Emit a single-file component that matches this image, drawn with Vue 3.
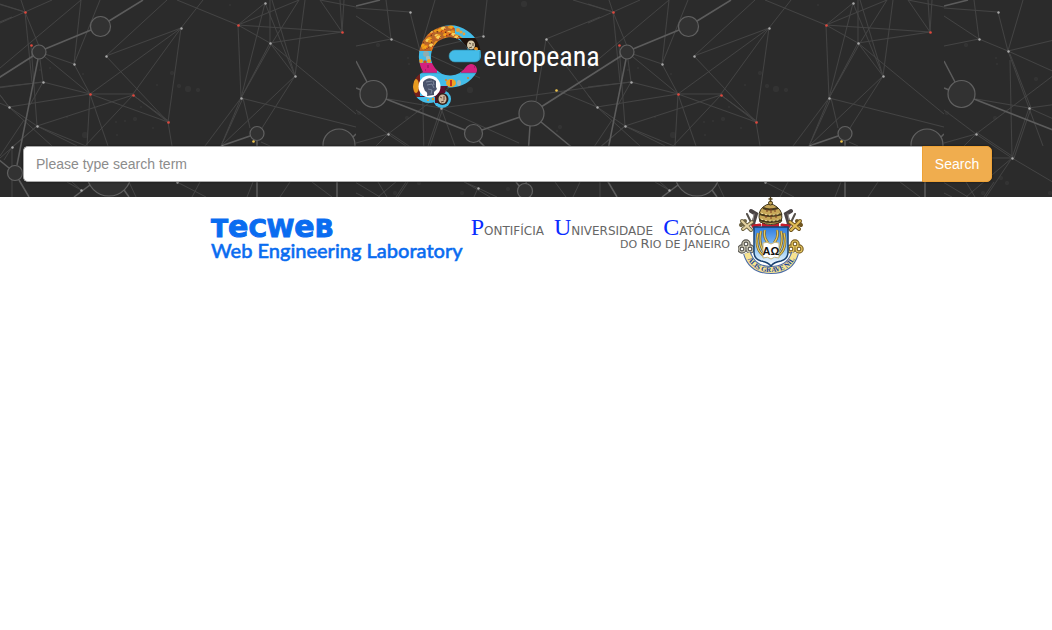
<script setup>
import { ref } from 'vue'

const term = ref('')

// Constellation artwork: one 588px wide tile, x runs from 356 to 944.
const thin = [
  'M356 8L410 12L420 51L435 0M386 0L391 39L356 16M356 46L391 39L420 51L483 36L487 0',
  'M420 51L480 78M420 51L441 108L424 158L422 60M422 54L443 108L426 158',
  'M388 99L441 108L519 143M441 108L600 86L631 82M441 108L455 146',
  'M356 110L388 134L470 72M356 143L388 134L424 158L490 197M388 132L427 158M404 158H424',
  'M388 134L372 150M424 158L398 197M424 158L378 197M378 182L387 197M356 193L364 197',
  'M464 182L478 188L474 197M478 188L497 197M355 182L380 197M406 182L396 197M555 182L566 197M580 182L573 197',
  'M600 17L546 39L536 101M546 39L597 107L556 90M573 0L613 12L640 0M613 12L609 0M613 12L588 4M588 23L613 12',
  'M613 12L627 46M613 12L620 82M669 0L588 68M669 0L662 64L688 0M662 64L678 94L627 52L662 64',
  'M631 82L627 52M588 87L631 82L678 94L597 107L588 95M619 45L625 126M631 82L618 105',
  'M678 94H721L769 28L678 94L756 122L721 95L625 126M769 28L756 122M694 56L756 122M694 56L769 28L791 0M694 56L755 0',
  'M678 94L675 146M678 94L696 146M721 95L673 146M756 122L760 146M722 96L758 122',
  'M597 107L625 126L665 146M625 126L674 146M625 126L600 147L592 160M625 126L588 158M597 107L640 146',
  'M600 147V197M612 120L588 156M655 182L669 190L660 182M765 182L794 197M788 182L780 197M717 182L724 197',
  'M765 0L826 25L853 3L829 98L826 25L887 0M826 25L930 32L858 43L826 25',
  'M858 0V43L829 98L860 43L887 0M853 3L883 76L860 0M883 76L893 0M883 76L858 43L944 114',
  'M829 98L944 127M829 98L809 146L831 98L838 128M829 98L793 146M883 76L850 128M883 76L809 146',
  'M908 0L930 32L928 0M930 32L932 0M908 0L944 7M849 142L858 146M841 182L835 197M878 182L868 197M900 182L920 197',
]
const thick = [
  'M356 6L380 0M356 61L367 82M356 88L361 90M386 99L465 130M479 141L486 148M482 130L520 117',
  'M541 107L621 56M541 122L597 168M530 126L526 185M516 182L520 187M605 165L626 59M633 49L679 30M697 21L731 0',
  'M607 180L617 197M678 185L662 197M712 190L717 197M809 146L838 136M845 141V197M925 161V197M941 137L944 134',
]
const rings = [
  [373.5, 94, 13.5], [473.5, 133.5, 9], [531.5, 113.5, 12.5], [525, 191, 7.5], [603, 173, 7.5], [627, 52, 7],
  [688.5, 26.5, 10], [697, 174, 22], [845, 133.5, 7], [927, 145, 16],
]
const stars = [
  [410, 12], [391, 39], [420, 51], [483, 36], [546, 39], [597, 107], [388, 134], [441, 108], [424, 158],
  [478, 188], [662, 64], [694, 56], [769, 28], [631, 82], [625, 126], [600, 147], [669, 190], [765, 182],
  [853, 3], [858, 43], [883, 76], [829, 98], [810, 146],
]
const redStars = [[613, 12], [619, 45], [678, 94], [721, 95], [756, 122], [826, 25], [930, 32]]
const goldStars = [[556, 90], [841, 141]]
const dust = [
  [767, 86, 2], [776, 89, 3], [786, 90, 2], [760, 73, 2], [673, 135, 3], [723, 119, 2], [713, 121, 1], [704, 122, 1],
  [741, 128, 1], [705, 135, 1], [655, 117, 1], [628, 70, 1], [638, 68, 1], [671, 74, 1], [745, 85, 1], [729, 107, 1],
  [818, 5, 1], [470, 90, 3], [378, 45, 2], [359, 113, 2], [407, 118, 2], [413, 178, 2], [419, 183, 2], [395, 193, 2],
  [524, 4, 3], [560, 127, 2], [557, 131, 1], [462, 193, 2], [408, 58, 1], [409, 64, 1], [448, 79, 2], [508, 189, 2],
]

// Orange fish scattered over the upper-left arc of the mark.
const fish = []
for (let row = 0; row < 11; row++) {
  for (let col = 0; col < 13; col++) {
    const x = 7 + col * 4.4 + Math.sin(row * 7 + col * 3) * 1.6
    const y = 5 + row * 3.4 + Math.cos(row * 3 + col * 5) * 1.2
    if (x + y * 0.4 < 60) fish.push({ x, y, alt: (row * 5 + col * 3) % 4 })
  }
}
const fishColors = ['#f5a51c', '#e9951b', '#f8d05b', '#e3761c']
</script>

<template>
  <div class="page">
    <header class="hero">
      <svg class="sky" aria-hidden="true">
        <defs>
          <pattern id="net" x="-232" y="0" width="588" height="197" viewBox="356 0 588 197" patternUnits="userSpaceOnUse">
            <circle v-for="(d, i) in dust" :key="'d' + i" :cx="d[0]" :cy="d[1]" :r="d[2]" fill="#333" />
            <path v-for="(d, i) in thin" :key="'t' + i" :d="d" class="thin" />
            <path v-for="(d, i) in thick" :key="'k' + i" :d="d" class="thick" />
            <circle v-for="(c, i) in rings" :key="'r' + i" :cx="c[0]" :cy="c[1]" :r="c[2]" class="ring" />
            <circle v-for="(s, i) in stars" :key="'s' + i" :cx="s[0] + .5" :cy="s[1] + .5" r="1.2" fill="#a8a8a8" />
            <circle v-for="(s, i) in redStars" :key="'e' + i" :cx="s[0] + .5" :cy="s[1] + .5" r="1.3" fill="#e0473c" />
            <circle v-for="(s, i) in goldStars" :key="'g' + i" :cx="s[0] + .5" :cy="s[1] + .5" r="1.3" fill="#f0c64c" />
          </pattern>
        </defs>
        <rect width="100%" height="100%" fill="url(#net)" />
      </svg>

      <div class="inner">
        <a class="brand" href="#">
          <svg class="mark" viewBox="0 0 72 90" aria-hidden="true">
            <defs>
              <mask id="letter" maskUnits="userSpaceOnUse" x="0" y="0" width="72" height="90">
                <path d="M60 47A25 25 0 1 1 64 33H44" fill="none" stroke="#fff" stroke-width="12" stroke-linecap="round" stroke-linejoin="round" />
                <circle cx="18" cy="64" r="16" fill="#fff" />
                <circle cx="31" cy="76" r="9" fill="#fff" />
              </mask>
            </defs>
            <g mask="url(#letter)">
              <rect width="72" height="90" fill="#43bce8" />
              <path d="M8 26Q12 4 36 3L54 8V16L36 15Q24 18 20 32H8Z" fill="#b8652a" />
              <g v-for="(f, i) in fish" :key="i">
                <ellipse :cx="f.x" :cy="f.y" rx="2.2" ry="1.7" :fill="fishColors[f.alt]" />
                <circle :cx="f.x + 1.4" :cy="f.y + 1" r=".8" :fill="f.alt % 2 ? '#6b3018' : '#b52f1b'" />
              </g>
              <path d="M44 3L52 2Q68 8 68 18H54Q50 12 44 11Z" fill="#43bce8" />
              <circle cx="47" cy="7" r="2" fill="#e9a13a" /><circle cx="50" cy="9" r="1.6" fill="#e9a13a" /><circle cx="53" cy="11" r="1.400" fill="#e9a13a" />
              <path d="M7 28H21V40H7Z" fill="#43bce8" />
              <circle cx="15" cy="31" r="3" fill="#8eaeb0" /><circle cx="17" cy="35" r="2.2" fill="#a9bcb4" />
              <circle cx="10" cy="38" r="2" fill="#f0a322" /><circle cx="14" cy="39" r="1.800" fill="#c94b1d" /><circle cx="18" cy="38" r="2" fill="#f0a322" />
              <path d="M48 15H70V27H58Z" fill="#20130c" />
              <ellipse cx="60" cy="22" rx="4" ry="4.5" fill="#d6c8a9" />
              <path d="M58 20l2 1M62 20v3M58 25l3-1" stroke="#5c4b37" />
              <circle cx="65" cy="26" r="2" fill="#e59325" />
              <path d="M6 40H26V50H6ZM50 38.500H71V50H50Z" fill="#d4207f" />
              <path d="M17 42v3M14 47h1M63 44h1" stroke="#851454" />
              <path d="M4 50H70" stroke="#277ba0" opacity=".5" />
              <path d="M0 50H9V74H0Z" fill="#75201d" />
              <ellipse cx="5" cy="63" rx="3" ry="7" fill="#e89b20" />
              <path d="M8 73H24L29 64H36L32 72V80H16Z" fill="#4d1028" />
              <path d="M28 63H37L34 70H26Z" fill="#5d102f" />
              <path d="M0 74H24V90H0Z" fill="#43bce8" />
              <circle cx="17" cy="77" r="1" fill="#e89b20" /><circle cx="22" cy="76" r="1.200" fill="#e89b20" />
              <ellipse cx="40" cy="60" rx="5" ry="4" fill="#f0a322" /><path d="M40 57v6" stroke="#c5311d" stroke-width="2" fill="none" />
              <ellipse cx="48" cy="60" rx="2" ry="3" fill="#9bb9c0" />
              <circle cx="35" cy="57" r="1" fill="#e67c20" /><circle cx="57" cy="55" r="1" fill="#e67c20" />
            </g>
            <path d="M64 27H44A6 6 0 0 0 44 39H64A5 5 0 0 0 69 34V28" fill="#43bce8" stroke="#237d9f" stroke-width=".6" />
            <circle cx="18.500" cy="63.500" r="11" fill="#fff" />
            <path d="M12 59q6-7 13-1l0 6 1 2-3 3v3l-7 1q1-4-2-5l-2-5z" fill="#4a546c" />
            <path d="M15 59l6-1M16 62l5-1 2 4M17 66l4 1-1 4M22 58l1 4" fill="none" stroke="#8a95ab" stroke-width=".8" />
            <circle cx="31.500" cy="76" r="6" fill="#352019" />
            <ellipse cx="31.500" cy="76" rx="4" ry="4.500" fill="#cdb69d" />
            <path d="M29 74l2 1M33 73v4M30 79l3-1" stroke="#684a39" fill="none" />
          </svg>
          <span class="brand-name">europeana</span>
        </a>

        <form class="search" role="search" @submit.prevent>
          <input v-model="term" type="text" aria-label="Search term" placeholder="Please type search term" />
          <button type="submit">Search</button>
        </form>
      </div>
    </header>

    <footer class="inner credits">
      <div class="lab">
        <span class="lab-mark">T<i>e</i>CW<i>e</i>B</span>
        <span class="lab-name">Web Engineering Laboratory</span>
      </div>
      <div class="university">
        <div class="uni-name">
          <span><b>P</b>ontifícia</span><span><b>U</b>niversidade</span><span><b>C</b>atólica</span>
        </div>
        <div class="uni-city">do <i>R</i>io de <i>J</i>aneiro</div>
      </div>
      <svg class="crest" viewBox="0 0 66 80" role="img" aria-label="University crest">
        <defs>
          <linearGradient id="field" x1="0" y1="0" x2="0" y2="1">
            <stop offset="0" stop-color="#2d7ce0" /><stop offset=".65" stop-color="#a5d2f8" /><stop offset="1" stop-color="#fff" />
          </linearGradient>
        </defs>
        <g fill="none" stroke-linecap="round">
          <path d="M9 17L23 46M57 17L43 46" stroke="#55504a" stroke-width="2" />
          <path d="M13 14l5 3-3 10 3 4M53 14l-5 3 3 10-3 4" stroke="#4a4345" stroke-width="4" />
          <path d="M16 17l-1 6M50 17l1 6" stroke="#9a9494" />
          <path d="M15 29l7-1M51 29l-7-1" stroke="#c51d2c" stroke-width="3" />
          <path d="M4 24l9 9M5 32l9-7M3 28l4-4" stroke="#6f6545" stroke-width="4" />
          <path d="M4 24l9 9M5 32l9-7" stroke="#e4d3a0" stroke-width="2" />
          <path d="M62 24l-9 9M61 32l-9-7M63 28l-4-4" stroke="#6f5520" stroke-width="4" />
          <path d="M62 24l-9 9M61 32l-9-7" stroke="#e2bd56" stroke-width="2" />
          <g stroke="#57554f" stroke-width="3.500"><circle cx="8" cy="47" r="3" /><circle cx="4" cy="52" r="3" /><circle cx="12" cy="52" r="3" /></g>
          <g stroke="#c9c6b5" stroke-width="1.200"><circle cx="8" cy="47" r="3" /><circle cx="4" cy="52" r="3" /><circle cx="12" cy="52" r="3" /></g>
          <g stroke="#7d6227" stroke-width="3.500"><circle cx="57" cy="47" r="3" /><circle cx="53" cy="52" r="3" /><circle cx="61" cy="52" r="3" /></g>
          <g stroke="#e5c65f" stroke-width="1.200"><circle cx="57" cy="47" r="3" /><circle cx="53" cy="52" r="3" /><circle cx="61" cy="52" r="3" /></g>
        </g>
        <path d="M24 25q8 6 17 0v5H24z" fill="#c51d2c" />
        <path d="M22 25q-3-10 3-15 7-6 14 0 7 5 4 15-10 5-21 0z" fill="#c7a758" stroke="#3e341e" />
        <path d="M22 23q10 4 22 0M22 17q10 4 22 0M25 11q7 3 15 0" stroke="#463a1c" stroke-width="2" fill="none" />
        <path d="M23 22q10 4 20 0M23 16q10 4 20 0" stroke="#f6e7a7" fill="none" stroke-dasharray="2 2" />
        <path d="M29 12v3M33 11v5M37 12v3M28 18v3M33 18v4M38 18v3" stroke="#7b3f22" />
        <circle cx="32.500" cy="6" r="2" fill="#c7a758" stroke="#463a1c" />
        <path d="M32.500 0v5M30.500 2h4" stroke="#57471f" stroke-width="1.300" />
        <path d="M9 56Q14 73 33 73Q52 73 57 56" fill="none" stroke="#4b6ba8" stroke-width="8" />
        <path d="M9 56Q14 73 33 73Q52 73 57 56" fill="none" stroke="#f7e391" stroke-width="6" />
        <path id="motto-line" d="M7 55Q12 75 33 75Q54 75 59 55" fill="none" />
        <text class="motto"><textPath href="#motto-line" startOffset="50%" text-anchor="middle">ALIS GRAVE NIL</textPath></text>
        <path d="M16 30H50V55Q50 62 43 64Q36 65 33 69Q30 65 23 64Q16 62 16 55Z" fill="url(#field)" stroke="#18416f" stroke-width="1.500" />
        <g fill="none" stroke="#786226" stroke-width="2.500">
          <path d="M20 36q-4 16 6 23M23 34q-3 12 3 21M27 33q-2 7 3 13M46 36q4 16-6 23M43 34q3 12-3 21M39 33q2 7-3 13" />
        </g>
        <g fill="none" stroke="#e7c95e" stroke-width="1.200">
          <path d="M20 36q-4 16 6 23M23 34q-3 12 3 21M27 33q-2 7 3 13M46 36q4 16-6 23M43 34q3 12-3 21M39 33q2 7-3 13" />
        </g>
        <path d="M25 46q4-2 8 1 4-3 8-1v15q-5-2-8 1-3-3-8-1z" fill="#fff" stroke="#c6b67f" />
        <text x="33" y="58" text-anchor="middle" class="crest-letters">AΩ</text>
      </svg>
    </footer>
  </div>
</template>

<style>
body {
  margin: 0;
  background: #fff;
}
</style>

<style scoped>
.page {
  font-family: "Liberation Sans", Arial, sans-serif;
}
.hero {
  position: relative;
  padding: 23px 0 15px;
  background: #2b2b2b;
}
.sky {
  position: absolute;
  inset: 0;
  width: 100%;
  height: 100%;
}
.thin {
  fill: none;
  stroke: #434343;
  stroke-width: 1;
}
.thick {
  fill: none;
  stroke: #5c5c5c;
  stroke-width: 1.500;
}
.ring {
  fill: #323232;
  stroke: #606060;
  stroke-width: 1.200;
}
.inner {
  position: relative;
  margin: 0 60px 0 23px;
}
.brand {
  display: flex;
  justify-content: center;
  margin-right: 4px;
  color: #fff;
  text-decoration: none;
}
.mark {
  width: 72px;
  height: 90px;
}
.brand-name {
  font: 28px/36px "Roboto Condensed", Roboto, "Liberation Sans", sans-serif;
  margin-top: 16px;
}
.search {
  display: flex;
  margin-top: 33px;
  border-radius: 5px;
  box-shadow: 0 0 2px #111;
}
.search input {
  flex: 1;
  min-width: 0;
  height: 36px;
  box-sizing: border-box;
  padding: 0 12px;
  border: 1px solid #aaa;
  border-right: 0;
  border-radius: 5px 0 0 5px;
  background: #fff;
  font: 14px "Liberation Sans", Arial, sans-serif;
  color: #444;
}
.search input::placeholder {
  color: #8c8c8c;
  opacity: 1;
}
.search button {
  width: 70px;
  height: 36px;
  padding: 0;
  border: 1px solid #eea236;
  border-radius: 0 5px 5px 0;
  background: #f0ad4e;
  color: #fff;
  font: 14px "Liberation Sans", Arial, sans-serif;
}
.credits {
  display: flex;
  justify-content: center;
  align-items: flex-start;
}
.lab {
  display: flex;
  flex-direction: column;
  padding-top: 18px;
  color: #0a6cf0;
}
.lab-mark {
  font: 900 25px/24px "DejaVu Sans", sans-serif;
  -webkit-text-stroke: 1px #0a6cf0;
}
.lab-mark i {
  font-size: 30px;
  font-style: normal;
  line-height: 24px;
}
.lab-name {
  font: 500 20px/18px "Lato Medium", Lato, sans-serif;
  -webkit-text-stroke: 0.5px #0a6cf0;
  white-space: nowrap;
}
.university {
  margin: 26px 8px 0 8px;
  color: #666;
}
.uni-name {
  display: flex;
  justify-content: space-between;
  gap: 10px;
  font: 12px/16px "DejaVu Sans", sans-serif;
  text-transform: uppercase;
}
.uni-name b {
  font: 24px/8px "Liberation Serif", serif;
  color: #0a2cff;
}
.uni-city {
  font: 11px/10px "DejaVu Sans", sans-serif;
  text-align: right;
  text-transform: uppercase;
}
.uni-city i {
  font-size: 13px;
  font-style: normal;
}
.crest {
  width: 66px;
  height: 80px;
}
.crest-letters {
  font: bold 11px "Liberation Sans", Arial, sans-serif;
  fill: #111;
}
.motto {
  font: bold 7px "Liberation Serif", serif;
  fill: #153f9c;
}
</style>
